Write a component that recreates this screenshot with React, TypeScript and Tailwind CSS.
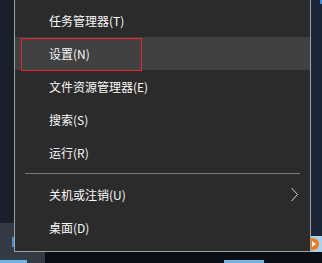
import { Fragment } from 'react';

const items = [
  { label: '任务管理器(T)' },
  { label: '设置(N)', active: true },
  { label: '文件资源管理器(E)' },
  { label: '搜索(S)' },
  { label: '运行(R)', sep: true },
  { label: '关机或注销(U)', sub: true },
  { label: '桌面(D)' },
];

export default function App() {
  return (
    <div
      className="relative flex flex-col w-[322px] h-[263px] overflow-hidden bg-[#17202a]"
      style={{ fontFamily: '"Noto Sans CJK SC", "Noto Sans", sans-serif' }}
    >
      <div className="flex h-[252px]">
        {/* desktop left edge */}
        <div className="flex flex-col w-[14px]">
          <div className="flex-1 bg-[#17202a]" />
          <div className="h-[29px] bg-[#333a44] flex justify-end pt-[14px]">
            <div className="w-[2px] h-[10px] bg-[#4a90d0]" />
          </div>
        </div>

        {/* context menu */}
        <div className="w-[297px] bg-[#2b2b2b] border-x border-b border-[#a0a0a0] pt-[4px] text-[12px] text-[#f7f7f7]">
          {items.map((it) => (
            <Fragment key={it.label}>
              <div
                className={`flex items-center justify-between h-[33px] pl-[34px] pr-[11px] ${it.active ? 'bg-[#414141]' : ''}`}
              >
                <span className="leading-none">{it.label}</span>
                {it.sub && (
                  <svg width="9" height="15" viewBox="0 0 9 15" fill="none">
                    <path d="M1.5 1 L7.5 7.5 L1.5 14" stroke="#d8d8d8" strokeWidth="1" />
                  </svg>
                )}
              </div>
              {it.sep && (
                <div className="h-[9px] flex items-center px-[10px]">
                  <div className="h-px w-full bg-[#7a7a7a]" />
                </div>
              )}
            </Fragment>
          ))}
        </div>

        {/* desktop right edge */}
        <div className="flex flex-col w-[11px] bg-[#1b2734]">
          <div className="self-end w-[2px] h-[4px] bg-[#3b8fe0]" />
          <div className="flex-1" />
          <div className="h-[16px] bg-[#a9d2ee] flex items-center">
            <div className="w-[8px] h-[12px] rounded-r-full bg-[#f07a1a] flex items-center pl-[1px]">
              <div className="w-[4px] h-[6px] bg-white [clip-path:polygon(0_0,100%_50%,0_100%)]" />
            </div>
          </div>
        </div>
      </div>

      {/* taskbar strip */}
      <div className="flex flex-1 items-end bg-[#0a0e14]">
        <div className="w-[45px] h-full bg-[#333a44] flex items-end">
          <div className="w-[27px] h-[3px] bg-[#6fb3e6]" />
        </div>
        <div className="w-[179px]" />
        <div className="w-[40px] h-[3px] bg-[#6fb3e6]" />
      </div>

      {/* red highlight annotation */}
      <div className="absolute left-[21px] top-[38px] w-[121px] h-[33px] border border-[#e8252b]" />
    </div>
  );
}
